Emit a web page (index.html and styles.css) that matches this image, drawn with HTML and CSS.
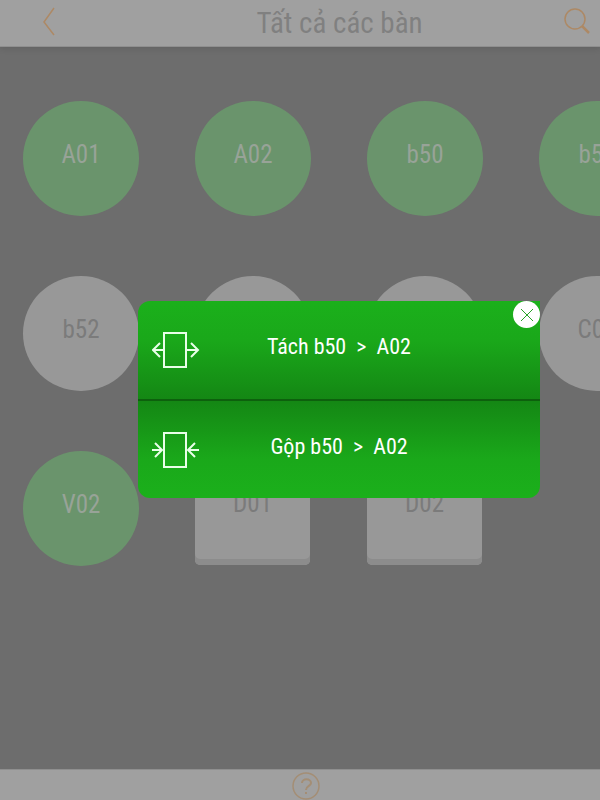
FILE: index.html
```
<!DOCTYPE html>
<html lang="vi">
<head>
    <meta charset="UTF-8">
    <meta name="viewport" content="width=device-width, initial-scale=1.0">
    <title>Tất cả các bàn</title>
    <link rel="stylesheet" href="styles.css">
</head>
<body>
    <header class="top-bar">
        <button class="icon-btn" type="button" aria-label="Quay lại">
            <svg width="14" height="30" viewBox="0 0 14 30"><path d="M12 2 L2 16 L12 29"/></svg>
        </button>
        <h1>Tất cả các bàn</h1>
        <button class="icon-btn" type="button" aria-label="Tìm kiếm">
            <svg width="28" height="28" viewBox="0 0 28 28"><circle cx="12" cy="12" r="10"/><path class="handle" d="M19 19 L26 26"/></svg>
        </button>
    </header>

    <main class="tables">
        <button class="table busy" type="button">A01</button>
        <button class="table busy" type="button">A02</button>
        <button class="table busy" type="button">b50</button>
        <button class="table busy" type="button">b51</button>
        <button class="table" type="button">b52</button>
        <button class="table" type="button"></button>
        <button class="table" type="button"></button>
        <button class="table" type="button">C01</button>
        <button class="table busy" type="button">V02</button>
        <button class="table square" type="button">D01</button>
        <button class="table square" type="button">D02</button>
    </main>

    <footer class="bottom-bar">
        <button class="icon-btn" type="button" aria-label="Trợ giúp">
            <svg width="28" height="28" viewBox="0 0 28 28"><circle cx="14" cy="14" r="13"/><path class="mark" d="M10 11 C10 6 19 6 19 11 C19 14 14 14 14 18 M14 20 V22"/></svg>
        </button>
    </footer>

    <div class="popup" role="dialog" aria-label="Tách hoặc gộp bàn">
        <button class="action split" type="button">
            <svg width="48" height="36" viewBox="0 0 48 36"><path d="M12 1 H34 V35 H12 Z M12 18 H1 M8 11 L1 18 L8 25 M34 18 H46 M39 11 L46 18 L39 25"/></svg>
            <span>Tách b50 &nbsp;&gt;&nbsp; A02</span>
        </button>
        <button class="action merge" type="button">
            <svg width="48" height="36" viewBox="0 0 48 36"><path d="M12 1 H34 V35 H12 Z M0 18 H10 M3 11 L10 18 L3 25 M47 18 H36 M43 11 L36 18 L43 25"/></svg>
            <span>Gộp b50 &nbsp;&gt;&nbsp; A02</span>
        </button>
        <button class="close-btn" type="button" aria-label="Đóng">
            <svg width="14" height="14" viewBox="0 0 14 14"><path d="M1 1 L13 13 M13 1 L1 13"/></svg>
        </button>
    </div>
</body>
</html>
```
FILE: styles.css
```
:root {
    --bar: #a0a0a0;
    --backdrop: #6d6d6d;
    --orange: #ad8965;
    --green: #1bb01b;
    --green-dark: #148714;
}

* {
    box-sizing: border-box;
}

body {
    margin: 0;
    min-height: 100vh;
    display: flex;
    flex-direction: column;
    position: relative;
    overflow: hidden;
    background: var(--backdrop);
    font-family: "Roboto Condensed", "Liberation Sans Narrow", Roboto, sans-serif;
}

button {
    border: none;
    padding: 0;
    background: none;
    font-family: inherit;
    cursor: pointer;
}

svg {
    display: block;
    fill: none;
    stroke: currentColor;
}

.top-bar {
    display: flex;
    align-items: center;
    height: 47px;
    padding: 0 9px 4px 42px;
    background: var(--bar);
    border-bottom: 1px solid #8f8f8f;
    box-shadow: 0 2px 6px rgba(0, 0, 0, 0.1);
}

.top-bar h1 {
    flex: 1;
    margin: 0;
    padding: 4px 0 0 60px;
    font-size: 29px;
    line-height: 36px;
    font-weight: 400;
    text-align: center;
    color: #808080;
}

.icon-btn {
    color: var(--orange);
}

.icon-btn svg {
    stroke-width: 1.5;
}

.icon-btn .handle {
    stroke-width: 2.5;
}

.tables {
    flex: 1;
    display: grid;
    grid-template-columns: repeat(4, 116px);
    grid-auto-rows: 115px;
    gap: 60px 56px;
    padding: 54px 0 0 23px;
}

.table {
    padding-bottom: 8px;
    border-radius: 50%;
    background: #989898;
    color: #7b7b7b;
    font-size: 25px;
    line-height: 32px;
}

.table.busy {
    background: #6a946c;
    color: #98a398;
}

.table.square {
    width: 115px;
    height: 114px;
    border-radius: 5px;
    box-shadow: inset 0 -6px 0 #8c8c8c;
}

.bottom-bar {
    display: flex;
    justify-content: center;
    height: 31px;
    padding: 2px 0 0 12px;
    background: var(--bar);
    border-top: 1px solid #8f8f8f;
}

.bottom-bar .icon-btn {
    height: 28px;
    color: #a48e75;
}

.bottom-bar .mark {
    stroke-width: 2;
}

.popup {
    position: absolute;
    top: 301px;
    left: 23%;
    width: 67%;
    border-radius: 12px 0 12px 12px;
    overflow: hidden;
}

.action {
    display: grid;
    grid-template-columns: 48px 1fr 48px;
    align-items: center;
    width: 100%;
    height: 98px;
    padding: 0 14px;
    color: #e9ffe9;
    font-size: 22px;
    line-height: 28px;
}

.action svg {
    stroke-width: 2;
}

.action span {
    padding-bottom: 6px;
    color: #fff;
}

.split {
    background: linear-gradient(var(--green), #1aa81a 40%, var(--green-dark));
}

.merge {
    height: 99px;
    background: linear-gradient(var(--green-dark), #1aa81a 60%, var(--green));
    border-top: 2px solid #0d600d;
}

.close-btn {
    position: absolute;
    top: 0;
    right: 0;
    display: flex;
    align-items: center;
    justify-content: center;
    width: 27px;
    height: 27px;
    border-radius: 50%;
    background: #fff;
    color: #27a327;
}
```
